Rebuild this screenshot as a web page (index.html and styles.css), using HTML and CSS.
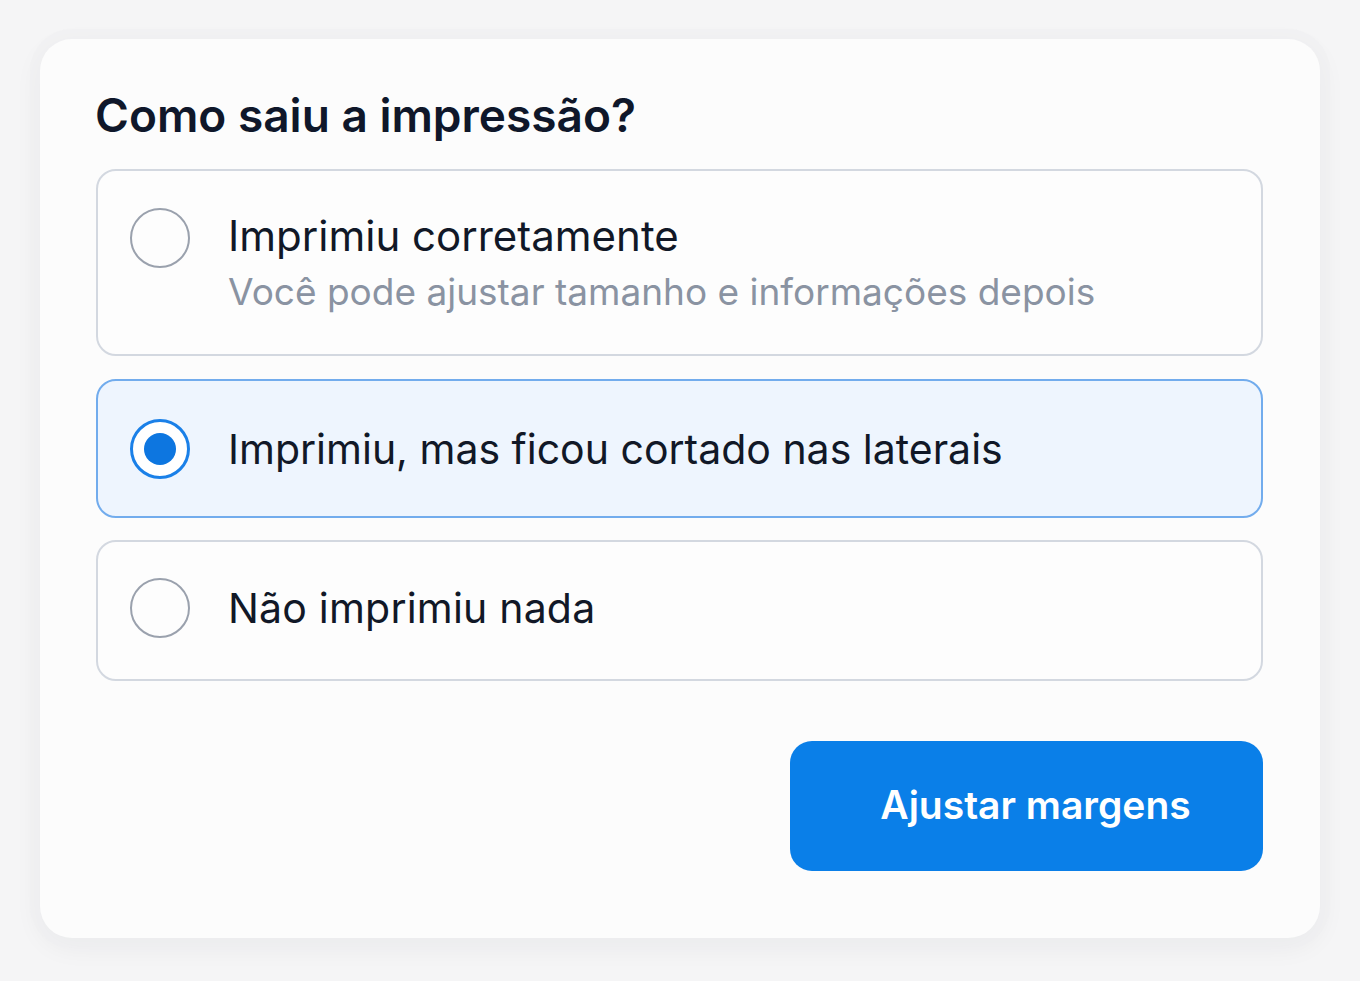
FILE: index.html
```html
<!DOCTYPE html>
<html lang="pt">
<head>
<meta charset="utf-8">
<link rel="stylesheet" href="styles.css">
</head>
<body>
<div class="stage">
  <div class="card">
    <h1 class="title">Como saiu a impressão?</h1>
    <div class="options">
      <label class="option first">
        <span class="radio"></span>
        <span class="text">
          <span class="label">Imprimiu corretamente</span>
          <span class="sub">Você pode ajustar tamanho e informações depois</span>
        </span>
      </label>
      <label class="option selected">
        <span class="radio"><span class="dot"></span></span>
        <span class="text">
          <span class="label">Imprimiu, mas ficou cortado nas laterais</span>
        </span>
      </label>
      <label class="option last">
        <span class="radio"></span>
        <span class="text">
          <span class="label">Não imprimiu nada</span>
        </span>
      </label>
    </div>
    <div class="actions">
      <button class="btn">Ajustar margens</button>
    </div>
  </div>
</div>
</body>
</html>
```
FILE: styles.css
```css
* { box-sizing: border-box; }
html, body { margin: 0; padding: 0; }
body {
  background: #f5f5f6;
  font-family: Inter, "Noto Sans", "Liberation Sans", sans-serif;
  color: #111827;
  width: 1360px;
  height: 981px;
  overflow: hidden;
}
.stage {
  padding: 39px 40px 0 40px;
}
.card {
  width: 1280px;
  height: 899px;
  background: #fcfcfc;
  border-radius: 32px;
  box-shadow: 0 0 0 10px rgba(238,239,241,0.55), 0 8px 28px rgba(20,30,50,0.06);
  padding: 46px 56px 0 56px;
  display: flex;
  flex-direction: column;
}
.title {
  margin: 0 0 0 -1px;
  font-size: 46px;
  font-weight: 600;
  line-height: 60px;
  letter-spacing: 0;
  color: #0f172a;
}
.options {
  margin-top: 24px;
  display: flex;
  flex-direction: column;
  gap: 23px;
  width: 1167px;
}
.option {
  display: flex;
  align-items: center;
  gap: 38px;
  border: 2px solid #d3d8e0;
  border-radius: 20px;
  padding: 0 32px;
  min-height: 139px;
  background: #fdfdfd;
}
.option.first {
  min-height: 187px;
  align-items: flex-start;
  padding-top: 37px;
}
.option.last {
  margin-top: -1px;
  min-height: 141px;
  padding-bottom: 6px;
}
.option.selected {
  background: #eef5fe;
  border-color: #72aced;
}
.radio {
  flex: none;
  width: 60px;
  height: 60px;
  border-radius: 50%;
  border: 2.5px solid #9aa1ad;
  display: flex;
  align-items: center;
  justify-content: center;
}
.option.selected .radio {
  border: 3px solid #1a80e8;
  background: #fff;
}
.dot {
  width: 32px;
  height: 32px;
  border-radius: 50%;
  background: #0d76e0;
}
.text {
  display: flex;
  flex-direction: column;
}
.label {
  font-size: 41px;
  line-height: 52px;
  font-weight: 400;
  color: #111827;
  letter-spacing: 0;
}
.first .label { font-size: 42px; }
.last .label { letter-spacing: 0.2px; }
.sub {
  font-size: 37px;
  line-height: 52px;
  color: #8a93a2;
  margin-top: 4px;
}
.first .text { margin-top: 2px; }
.actions {
  margin-top: 60px;
  width: 1167px;
  display: flex;
  justify-content: flex-end;
}
.btn {
  width: 473px;
  height: 130px;
  border: none;
  border-radius: 22px;
  background: #0a7fe8;
  color: #fff;
  font-family: Inter, "Noto Sans", sans-serif;
  font-size: 39px;
  font-weight: 600;
  letter-spacing: 0;
  padding: 0 0 4px 18px;
}
```
